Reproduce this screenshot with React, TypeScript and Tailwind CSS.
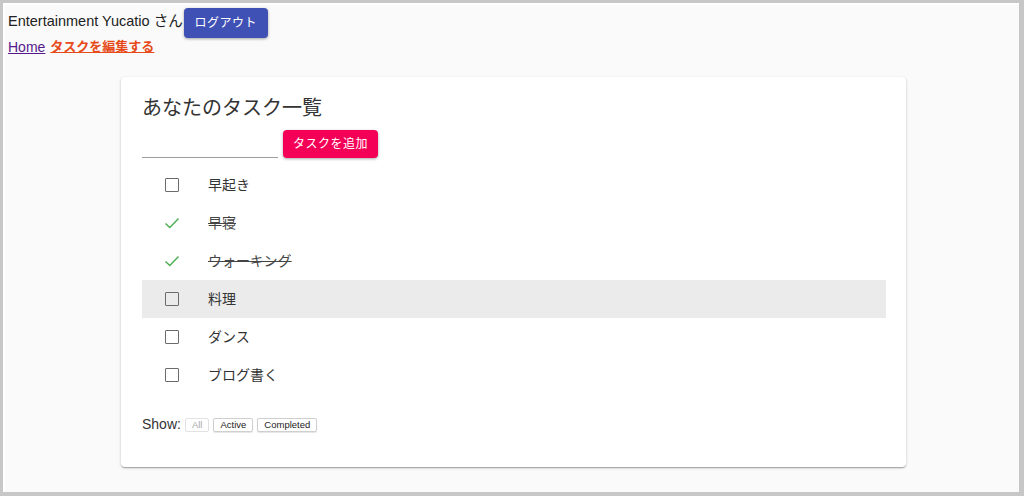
import { useState } from "react";

const jp = "font-['Helvetica','Liberation_Sans','Noto_Sans_CJK_JP',sans-serif]";

type Task = { id: number; title: string; done: boolean };

const initial: Task[] = [
  { id: 1, title: "早起き", done: false },
  { id: 2, title: "早寝", done: true },
  { id: 3, title: "ウォーキング", done: true },
  { id: 4, title: "料理", done: false },
  { id: 5, title: "ダンス", done: false },
  { id: 6, title: "ブログ書く", done: false },
];

function Check({ done }: { done: boolean }) {
  if (done) {
    return (
      <svg width="18" height="18" viewBox="0 0 18 18" className="block">
        <path d="M2.5 9.5 L6.8 13.6 L15.5 4.6" fill="none" stroke="#4caf50" strokeWidth="1.4" />
      </svg>
    );
  }
  return <div className="h-[14px] w-[14px] rounded-[1px] border-[1.6px] border-[#6b6b6b]" />;
}

export default function App() {
  const [tasks] = useState(initial);
  const [hover] = useState(4);

  return (
    <div className={`h-[500px] w-[1024px] overflow-hidden bg-white ${jp}`}>
      <div className="flex h-[496px] flex-col border-b-[4px] border-l-[3px] border-r-[5px] border-t-[3px] border-[#c7c7c7]">
        <div className="flex-1 border-t-[2px] border-l-[2px] border-white bg-[#fafafa] pl-[3px]">
          <div className="flex h-[32px] items-center">
            <span className="pt-[2px] text-[14.5px] text-[#222]">Entertainment Yucatio さん</span>
            <button className="ml-[1px] mt-[3px] h-[30px] w-[84px] rounded-[4px] bg-[#3f51b5] text-[12px] tracking-[0.5px] text-white shadow-[0_1px_3px_rgba(0,0,0,0.35)]">
              ログアウト
            </button>
          </div>
          <div className="mt-[1px] flex h-[18px] items-center gap-[5px] text-[14px]">
            <a className="text-[#551a8b] underline">Home</a>
            <a className="text-[13px] font-bold text-[#e64a19] underline">タスクを編集する</a>
          </div>

          <div className="ml-[113px] mt-[21px] h-[390px] w-[785px] rounded-[4px] bg-white px-[21px] pt-[17px] shadow-[0_1px_3px_rgba(0,0,0,0.2),0_1px_1px_rgba(0,0,0,0.14),0_2px_1px_-1px_rgba(0,0,0,0.12)]">
            <h1 className="text-[20px] leading-[28px] text-[#333]">あなたのタスク一覧</h1>
            <div className="mt-[8px] flex items-end gap-[5px]">
              <div className="h-[24px] w-[136px] border-b border-[#9e9e9e]" />
              <button className="h-[28px] w-[95px] rounded-[4px] bg-[#f50057] text-[12px] tracking-[0.5px] text-white shadow-[0_1px_3px_rgba(0,0,0,0.35)]">
                タスクを追加
              </button>
            </div>
            <ul className="mt-[8px] w-[744px]">
              {tasks.map((t) => (
                <li
                  key={t.id}
                  className={`flex h-[38px] items-center ${t.id === hover ? "bg-[#ebebeb]" : ""}`}
                >
                  <div className="flex w-[58px] justify-center pl-[1px]">
                    <Check done={t.done} />
                  </div>
                  <span
                    className={`pl-[8px] text-[14px] ${t.done ? "text-[#444] line-through decoration-[#444]" : "text-[#333]"}`}
                  >
                    {t.title}
                  </span>
                </li>
              ))}
            </ul>
            <div className="mt-[20px] flex items-center gap-[4px]">
              <span className="text-[14px] text-[#333]">Show:</span>
              <button className="h-[14px] rounded-[2px] border border-[#e2e2e2] bg-white px-[6px] text-[9.5px] leading-[12px] text-[#aaa]">
                All
              </button>
              <button className="h-[14px] rounded-[2px] border border-[#cfcfcf] bg-white px-[6px] text-[9.5px] leading-[12px] text-[#222] shadow-[0_1px_1px_rgba(0,0,0,0.1)]">
                Active
              </button>
              <button className="h-[14px] rounded-[2px] border border-[#cfcfcf] bg-white px-[6px] text-[9.5px] leading-[12px] text-[#222] shadow-[0_1px_1px_rgba(0,0,0,0.1)]">
                Completed
              </button>
            </div>
          </div>
        </div>
      </div>
    </div>
  );
}
